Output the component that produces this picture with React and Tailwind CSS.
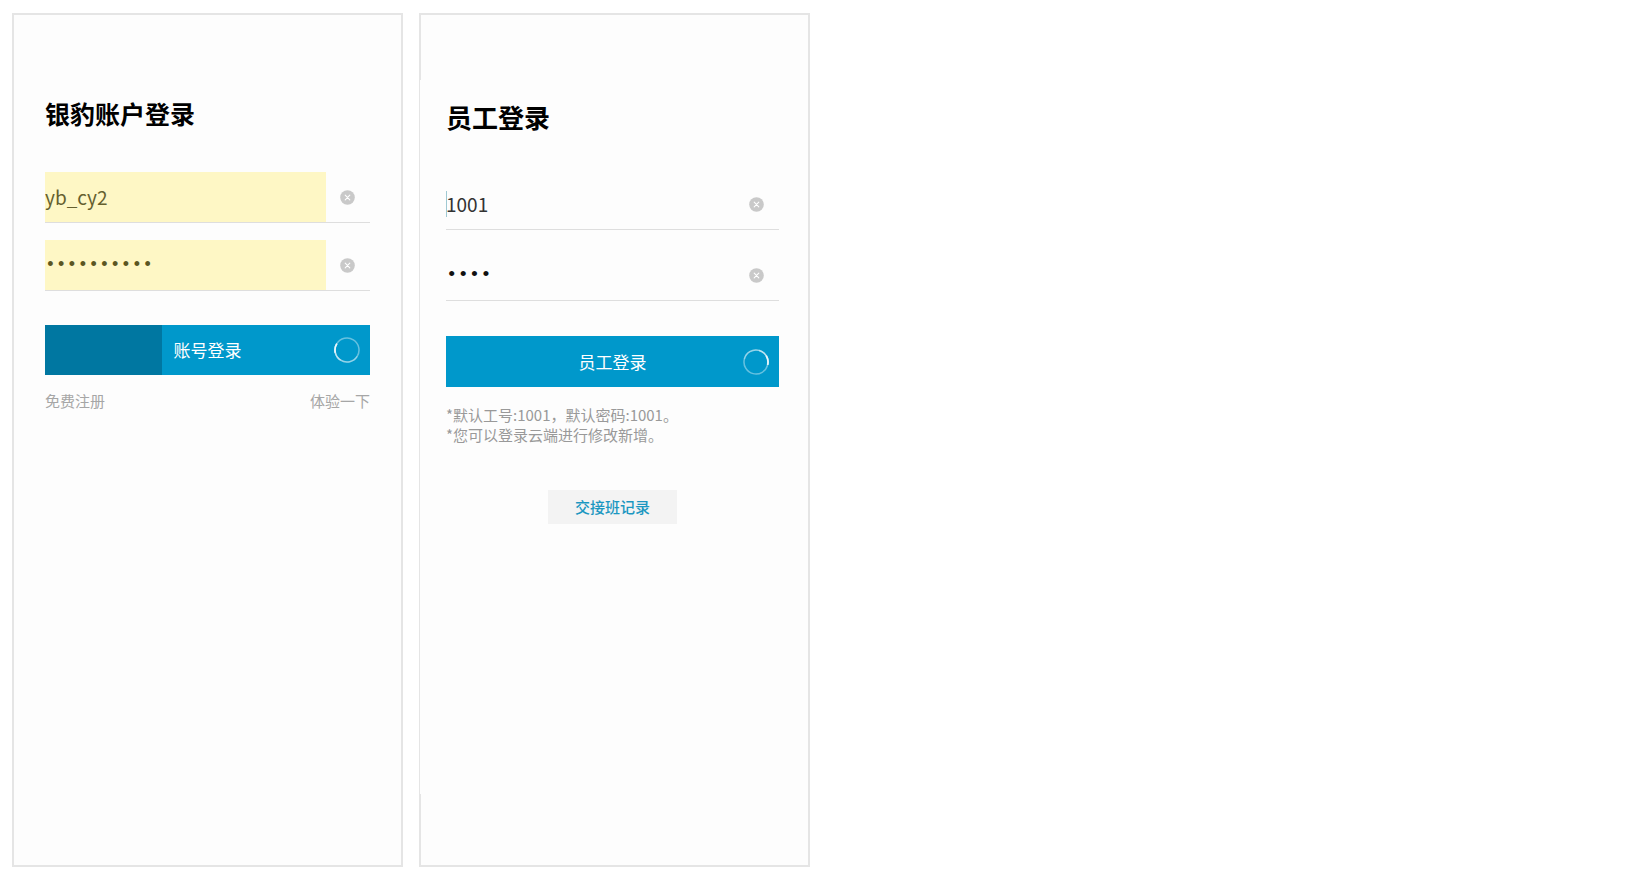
import React, { useState } from "react";

// Small grey button that empties a field
const ClearButton = ({ onClick, label }) => (
  <button
    type="button"
    onClick={onClick}
    aria-label={label}
    className="flex w-11 shrink-0 items-center justify-center pr-px"
  >
    <svg viewBox="0 0 15 15" className="h-[15px] w-[15px]">
      <circle cx="7.5" cy="7.5" r="7.3" fill="#c9c9c9" />
      <path
        d="M5.2 5.2l4.6 4.6M9.8 5.2l-4.6 4.6"
        stroke="#fff"
        strokeWidth="1.1"
        strokeLinecap="round"
      />
    </svg>
  </button>
);

// Thin ring with a tail that gets brighter towards its head
const Spinner = ({ head }) => (
  <svg viewBox="0 0 26 26" fill="none" className="h-[26px] w-[26px]">
    <g transform={`rotate(${head} 13 13)`} stroke="#fff">
      <circle cx="13" cy="13" r="12" strokeWidth="1.5" strokeOpacity="0.4" />
      <path d="M1 13A12 12 0 0 1 25 13" strokeWidth="1.5" strokeOpacity="0.3" />
      <path d="M13 1A12 12 0 0 1 25 13" strokeWidth="1.6" strokeOpacity="0.4" />
      <path d="M21.5 4.5A12 12 0 0 1 25 13" strokeWidth="1.8" strokeOpacity="0.7" />
    </g>
  </svg>
);

const AccountLogin = () => {
  const [account, setAccount] = useState("yb_cy2");
  const [password, setPassword] = useState("0123456789");

  return (
    <section className="flex w-full max-w-[391px] flex-col border-2 border-[#e5e5e5] bg-[#fdfdfd] px-[31px] pt-20">
      <h1 className="text-[25px] leading-9 font-bold text-black">
        银豹账户登录
      </h1>

      <form className="mt-[41px]" onSubmit={(e) => e.preventDefault()}>
        <div className="flex h-[51px] border-b border-[#dedede]">
          <input
            type="text"
            aria-label="账号"
            value={account}
            onChange={(e) => setAccount(e.target.value)}
            className="min-w-0 flex-1 bg-[#fef7c5] text-[19px] text-[#65602f] outline-none"
          />
          <ClearButton label="清除账号" onClick={() => setAccount("")} />
        </div>
        <div className="mt-[17px] flex h-[51px] border-b border-[#dedede]">
          <input
            type="password"
            aria-label="密码"
            value={password}
            onChange={(e) => setPassword(e.target.value)}
            className="min-w-0 flex-1 bg-[#fef7c5] font-['Liberation_Mono',monospace] text-[18px] text-[#5b5622] outline-none"
          />
          <ClearButton label="清除密码" onClick={() => setPassword("")} />
        </div>

        <button
          type="submit"
          className="relative mt-[34px] flex h-[50px] w-full items-center justify-center bg-[#0098cb] text-[17px] text-white"
        >
          <span className="absolute inset-y-0 left-0 w-[36%] bg-[#0077a1]" />
          <span className="relative">账号登录</span>
          <span className="absolute right-[10px]">
            <Spinner head={212} />
          </span>
        </button>
      </form>

      <div className="mt-4 flex justify-between text-[15px] leading-5 text-[#a6a6a6]">
        <a href="#register">免费注册</a>
        <a href="#trial">体验一下</a>
      </div>
    </section>
  );
};

const StaffLogin = () => {
  const [staffNo, setStaffNo] = useState("1001");
  const [password, setPassword] = useState("1001");

  return (
    <section className="relative flex w-full max-w-[391px] flex-col border-2 border-[#e5e5e5] bg-[#fdfdfd] pt-[84px] pr-[29px] pl-[25px]">
      {/* the left edge is thinner in the middle */}
      <span className="absolute top-[65px] bottom-[71px] -left-px w-px bg-[#fdfdfd]" />

      <h1 className="text-[26px] leading-9 font-bold text-black">员工登录</h1>

      <form className="mt-11" onSubmit={(e) => e.preventDefault()}>
        <div className="relative flex h-[51px] border-b border-[#dedede]">
          <span className="absolute top-3 left-0 h-[26px] w-px bg-[#9fc9d3]" />
          <input
            type="text"
            aria-label="工号"
            value={staffNo}
            onChange={(e) => setStaffNo(e.target.value)}
            className="min-w-0 flex-1 bg-transparent text-[19px] text-[#333] outline-none"
          />
          <ClearButton label="清除工号" onClick={() => setStaffNo("")} />
        </div>
        <div className="mt-5 flex h-[51px] border-b border-[#dedede]">
          <input
            type="password"
            aria-label="密码"
            value={password}
            onChange={(e) => setPassword(e.target.value)}
            className="min-w-0 flex-1 bg-transparent font-['Liberation_Mono',monospace] text-[19px] text-[#111] outline-none"
          />
          <ClearButton label="清除密码" onClick={() => setPassword("")} />
        </div>

        <button
          type="submit"
          className="relative mt-[35px] flex h-[51px] w-full items-center justify-center bg-[#0098cb] text-[17px] text-white"
        >
          <span>员工登录</span>
          <span className="absolute right-[10px]">
            <Spinner head={14} />
          </span>
        </button>
      </form>

      <div className="mt-[18px] text-[15px] leading-5 text-[#999]">
        <p>*默认工号:1001，默认密码:1001。</p>
        <p>*您可以登录云端进行修改新增。</p>
      </div>

      <button
        type="button"
        className="mt-[45px] h-[34px] w-[129px] self-center bg-[#f3f3f3] text-[15px] font-medium text-[#1b97c1]"
      >
        交接班记录
      </button>
    </section>
  );
};

const App = () => {
  return (
    <main
      lang="zh-CN"
      className="flex min-h-screen gap-4 bg-white px-3 pt-[13px] pb-[9px] font-['Noto_Sans_CJK_SC',sans-serif]"
    >
      <AccountLogin />
      <StaffLogin />
    </main>
  );
};

export default App;
